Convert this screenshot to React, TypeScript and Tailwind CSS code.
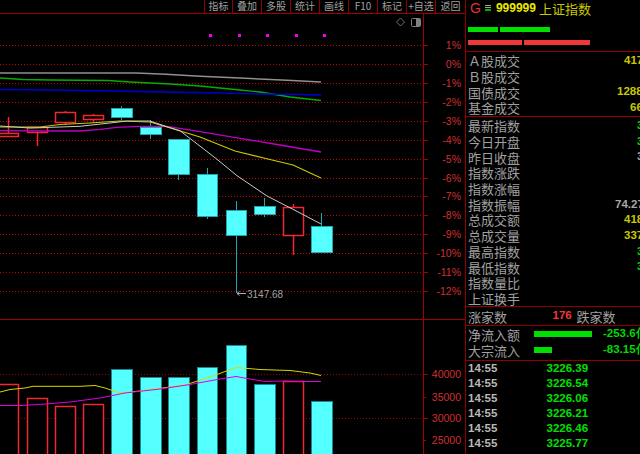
const cjk = '[font-family:"Noto_Sans_CJK_SC","Liberation_Sans",sans-serif]';
const AXIS_FONT = '"Liberation Sans", sans-serif';

const tools = [
  { label: '指标', w: 'w-[28px]' },
  { label: '叠加', w: 'w-[29px]' },
  { label: '多股', w: 'w-[29px]' },
  { label: '统计', w: 'w-[29px]' },
  { label: '画线', w: 'w-[29px]' },
  { label: 'F10', w: 'w-[29px]' },
  { label: '标记', w: 'w-[29px]' },
  { label: '+自选', w: 'w-[29px]' },
  { label: '返回', w: 'w-[30px]' },
];

type Candle = { x: number; w: number; top: number; bottom: number; hi: number; lo: number; up: boolean };

const candles: Candle[] = [
  { x: -2, w: 20, top: 133, bottom: 136, hi: 117, lo: 137, up: true },
  { x: 27, w: 20, top: 127, bottom: 132, hi: 127, lo: 146, up: true },
  { x: 55, w: 20, top: 112, bottom: 122, hi: 111, lo: 125, up: true },
  { x: 83, w: 20, top: 115, bottom: 119, hi: 114, lo: 123, up: true },
  { x: 111, w: 21, top: 108, bottom: 117, hi: 106, lo: 120, up: false },
  { x: 140, w: 21, top: 127, bottom: 134, hi: 120, lo: 139, up: false },
  { x: 168, w: 21, top: 139, bottom: 174, hi: 139, lo: 180, up: false },
  { x: 197, w: 20, top: 174, bottom: 216, hi: 168, lo: 219, up: false },
  { x: 226, w: 20, top: 210, bottom: 235, hi: 201, lo: 293, up: false },
  { x: 254, w: 21, top: 206, bottom: 214, hi: 198, lo: 217, up: false },
  { x: 283, w: 20, top: 207, bottom: 235, hi: 204, lo: 255, up: true },
  { x: 311, w: 21, top: 226, bottom: 252, hi: 213, lo: 226, up: false },
];

const volTops = [384, 398, 406, 404, 369, 377, 377, 367, 345, 384, 381, 401];

const pts = (list: number[][]) => list.map((p) => p.join(',')).join(' ');

const maLines = [
  { color: '#909090', width: 1.4, d: [[0, 73], [136, 73], [166, 74.3], [200, 76.3], [240, 78], [287, 80.3], [321, 82]] },
  { color: '#00b000', width: 1.4, d: [[0, 78], [23, 79.5], [50, 80], [108, 80.5], [130, 82], [170, 84], [200, 86], [230, 89], [260, 92], [290, 97], [321, 100.5]] },
  { color: '#0000d0', width: 1.4, d: [[0, 89.5], [50, 90], [110, 91], [165, 92], [220, 93], [260, 94], [300, 94.5], [321, 95]] },
  { color: '#c000c0', width: 1.3, d: [[0, 130.7], [50, 131], [80, 131], [100, 129.3], [117, 127.3], [140, 126.3], [167, 126.3], [200, 131.7], [240, 138.3], [280, 145], [321, 152]] },
  { color: '#c8c800', width: 1.2, d: [[0, 127], [40, 127], [60, 124.5], [90, 123], [120, 121], [150, 122], [167, 127], [200, 137], [235, 151], [272, 160], [293, 165], [321, 178]] },
  { color: '#c8c8c8', width: 1, d: [[0, 126], [30, 128], [60, 127], [80, 126.3], [110, 123], [127, 121], [150, 121], [167, 126.7], [180, 130.7], [217, 159.3], [237, 175.7], [267, 196], [293, 209.3], [321, 224]] },
];

const volLines = [
  { color: '#d8d800', d: [[0, 392], [10, 389.5], [25, 388], [33, 386.3], [80, 386.3], [95, 385.5], [105, 388], [120, 393], [125, 392.5], [140, 391], [185, 385], [210, 377], [236, 367.5], [260, 369.5], [290, 370.5], [310, 373], [321, 375.5]] },
  { color: '#e000e0', d: [[0, 405.5], [22, 405.5], [45, 404], [70, 402], [100, 398], [125, 393], [160, 389], [190, 384.5], [220, 379], [236, 376.5], [250, 379], [265, 381.5], [280, 381], [300, 381.5], [321, 381.5]] },
];

const percents = ['1%', '0%', '-1%', '-2%', '-3%', '-4%', '-5%', '-6%', '-7%', '-8%', '-9%', '-10%', '-11%', '-12%'];

const volTicks = [
  { label: '40000', y: 374, grid: true },
  { label: '35000', y: 397, grid: false },
  { label: '30000', y: 418, grid: true },
  { label: '25000', y: 440, grid: false },
];

function PriceChart() {
  return (
    <svg viewBox="0 14 465 305" className="block w-[465px] h-[305px]">
      {percents.map((p, i) => {
        const y = Math.round(45 + i * 18.93) + 0.5;
        return (
          <g key={p}>
            <line x1="0" x2="423" y1={y} y2={y} stroke="#c80000" strokeDasharray="1 2" shapeRendering="crispEdges" />
            <line x1="423" x2="428" y1={y} y2={y} stroke="#a00000" />
            <text x="461" y={y + 3.5} textAnchor="end" fontSize="10.5" fill="#d03030" fontFamily={AXIS_FONT}>{p}</text>
          </g>
        );
      })}
      <line x1="423.5" x2="423.5" y1="14" y2="319" stroke="#a00000" />
      {[209, 238, 266, 295, 323].map((x) => (
        <rect key={x} x={x} y="34" width="3" height="3" fill="#f000f0" />
      ))}
      <path d="M400.5 18 L404.5 22 L400.5 26 L396.5 22 Z" fill="none" stroke="#707070" />
      <rect x="411.5" y="18.5" width="9" height="8" rx="1" fill="none" stroke="#808080" />
      <rect x="416" y="19" width="4" height="7" fill="#808080" />
      {candles.map((c) => {
        const mid = Math.floor(c.x + c.w / 2) + 0.5;
        const edge = c.up ? '#f02830' : '#20a8b0';
        return (
          <g key={c.x}>
            <line x1={mid} x2={mid} y1={c.hi} y2={c.lo} stroke={edge} strokeWidth={c.up ? 1.5 : 1} />
            <rect x={c.x + 0.5} y={c.top + 0.5} width={c.w} height={c.bottom - c.top} fill={c.up ? '#000' : '#54ffff'} stroke={edge} strokeWidth={c.up ? 1.5 : 1} />
          </g>
        );
      })}
      {maLines.map((l) => (
        <polyline key={l.color} points={pts(l.d)} fill="none" stroke={l.color} strokeWidth={l.width} />
      ))}
      <path d="M237 293.5 L246 293.5 M237 293.5 L239.5 291.5 M237 293.5 L239.5 295.5" fill="none" stroke="#b0b0b0" />
      <text x="247" y="298" fontSize="10" fill="#a0a0a0" fontFamily={AXIS_FONT}>3147.68</text>
    </svg>
  );
}

function VolumeChart() {
  return (
    <svg viewBox="0 320 465 134" className="block w-[465px] h-[134px]">
      {volTicks.map((t) => (
        <g key={t.label}>
          {t.grid && <line x1="0" x2="423" y1={t.y + 0.5} y2={t.y + 0.5} stroke="#a00000" strokeDasharray="1 2" shapeRendering="crispEdges" />}
          <line x1="423" x2={t.grid ? 428 : 426} y1={t.y + 0.5} y2={t.y + 0.5} stroke="#a00000" />
          <text x="461" y={t.y + 3.5} textAnchor="end" fontSize="10.5" fill="#d03030" fontFamily={AXIS_FONT}>{t.label}</text>
        </g>
      ))}
      <line x1="423.5" x2="423.5" y1="320" y2="454" stroke="#a00000" />
      {candles.map((c, i) => (
        <rect
          key={c.x}
          x={c.x + 0.5}
          y={volTops[i] + 0.5}
          width={c.w}
          height={460 - volTops[i]}
          fill={c.up ? '#000' : '#54ffff'}
          stroke={c.up ? '#f02830' : '#188890'}
          strokeWidth={c.up ? 1.5 : 1}
        />
      ))}
      {volLines.map((l) => (
        <polyline key={l.color} points={pts(l.d)} fill="none" stroke={l.color} />
      ))}
    </svg>
  );
}

const topRows = [
  { label: 'Ａ股成交', value: '417.6亿', cls: 'ml-[104px] text-[#c8c800]' },
  { label: 'Ｂ股成交', value: '', cls: '' },
  { label: '国债成交', value: '1288万', cls: 'ml-[97px] text-[#c8c800]' },
  { label: '基金成交', value: '66.2亿', cls: 'ml-[110px] text-[#c8c800]' },
];

const midRows = [
  { label: '最新指数', value: '3226.39', cls: 'ml-[117px] text-[#00d800]' },
  { label: '今日开盘', value: '3292.11', cls: 'ml-[117px] text-[#00d800]' },
  { label: '昨日收盘', value: '3331.21', cls: 'ml-[117px] text-[#a8a8a8]' },
  { label: '指数涨跌', value: '', cls: '' },
  { label: '指数涨幅', value: '', cls: '' },
  { label: '指数振幅', value: '74.27', cls: 'ml-[95px] text-[#a8a8a8]' },
  { label: '总成交额', value: '418.8亿', cls: 'ml-[104px] text-[#c8c800]' },
  { label: '总成交量', value: '337.5万', cls: 'ml-[104px] text-[#c8c800]' },
  { label: '最高指数', value: '3292.11', cls: 'ml-[117px] text-[#00d800]' },
  { label: '最低指数', value: '3217.84', cls: 'ml-[117px] text-[#00d800]' },
  { label: '指数量比', value: '', cls: '' },
  { label: '上证换手', value: '', cls: '' },
];

const ticks = ['3226.39', '3226.54', '3226.06', '3226.21', '3226.46', '3225.77'];

function InfoRow({ label, value, cls }: { label: string; value: string; cls: string }) {
  return (
    <div className="flex items-center h-[15.7px] pl-[2px] whitespace-nowrap">
      <span className="w-[52px] shrink-0 text-[13px] leading-none text-[#a0a0a0]">{label}</span>
      {value && <span className={`text-[11.5px] font-bold leading-none [font-family:"Liberation_Sans",sans-serif] ${cls}`}>{value}</span>}
    </div>
  );
}

function FlowRow({ label, barW, value }: { label: string; barW: string; value: string }) {
  return (
    <div className="flex items-center h-[16px] pl-[2px] whitespace-nowrap">
      <span className="w-[52px] shrink-0 text-[13px] leading-none text-[#a0a0a0]">{label}</span>
      <span className="w-[83px] shrink-0 pl-[14px]">
        <span className={`block h-[6px] bg-[#00e000] ${barW}`} />
      </span>
      <span className="text-[11.5px] font-bold leading-none text-[#00d800] [font-family:'Liberation_Sans',sans-serif]">{value}</span>
    </div>
  );
}

function SidePanel() {
  return (
    <div className={`w-[174px] h-[454px] overflow-hidden flex flex-col ${cjk}`}>
      <div className="h-[52px] shrink-0 border-b border-[#900000]">
        <div className="flex items-center h-[16px] pl-[4px] whitespace-nowrap">
          <span className="text-[14px] leading-none text-[#e03030] [font-family:'Liberation_Sans',sans-serif]">G</span>
          <span className="ml-[4px] w-[6px] flex flex-col gap-[1px]">
            <span className="block h-[1px] bg-[#a0a0a0]" />
            <span className="block h-[1px] bg-[#a0a0a0]" />
            <span className="block h-[2px] bg-[#00b000]" />
          </span>
          <span className="ml-[5px] text-[12px] font-bold leading-none text-[#e8e800] [font-family:'Liberation_Sans',sans-serif]">999999</span>
          <span className="ml-[3px] text-[13px] leading-none text-[#c8c800]">上证指数</span>
        </div>
        <div className="flex gap-[2px] h-[5px] mt-[11px] ml-[2px]">
          <span className="w-[30px] bg-[#00e000]" />
          <span className="w-[50px] bg-[#00e000]" />
        </div>
        <div className="flex gap-[2px] h-[5px] mt-[8px] ml-[2px]">
          <span className="w-[54px] bg-[#f03838]" />
          <span className="w-[66px] bg-[#f03838]" />
        </div>
      </div>
      <div className="h-[65px] shrink-0 pt-[1px] border-b border-[#900000]">
        {topRows.map((r) => <InfoRow key={r.label} {...r} />)}
      </div>
      <div className="h-[190px] shrink-0 pt-[1px] border-b border-[#900000]">
        {midRows.map((r) => <InfoRow key={r.label} {...r} />)}
      </div>
      <div className="h-[19px] shrink-0 flex items-center pl-[2px] border-b border-[#900000] whitespace-nowrap">
        <span className="w-[84.5px] shrink-0 text-[13px] leading-none text-[#a0a0a0]">涨家数</span>
        <span className="w-[24px] shrink-0 text-[11.5px] font-bold leading-none text-[#f03838] [font-family:'Liberation_Sans',sans-serif]">176</span>
        <span className="text-[13px] leading-none text-[#a0a0a0]">跌家数</span>
      </div>
      <div className="h-[35px] shrink-0 border-b border-[#900000]">
        <FlowRow label="净流入额" barW="w-[58px]" value="-253.6亿" />
        <FlowRow label="大宗流入" barW="w-[18px]" value="-83.15亿" />
      </div>
      <div className="flex-1 whitespace-nowrap [font-family:'Liberation_Sans',sans-serif]">
        {ticks.map((p, i) => (
          <div key={i} className="flex items-center h-[15px] pl-[2px] text-[11.5px] font-bold leading-none">
            <span className="w-[78.5px] shrink-0 text-[#b8b8b8]">14:55</span>
            <span className="text-[#00e000]">{p}</span>
          </div>
        ))}
      </div>
    </div>
  );
}

export default function App() {
  return (
    <div className={`flex w-[640px] h-[454px] overflow-hidden bg-black ${cjk}`}>
      <div className="w-[466px] shrink-0 border-r border-[#900000]">
        <div className="h-[14px] flex justify-end border-b border-[#a00000]">
          {tools.map((t) => (
            <div
              key={t.label}
              className={`${t.w} h-[13px] shrink-0 overflow-hidden border-l border-[#900000] text-center text-[10px] leading-[11px] text-[#a0a0a0] whitespace-nowrap`}
            >
              {t.label}
            </div>
          ))}
        </div>
        <div className="h-[306px] border-b border-[#a00000]">
          <PriceChart />
        </div>
        <VolumeChart />
      </div>
      <SidePanel />
    </div>
  );
}
